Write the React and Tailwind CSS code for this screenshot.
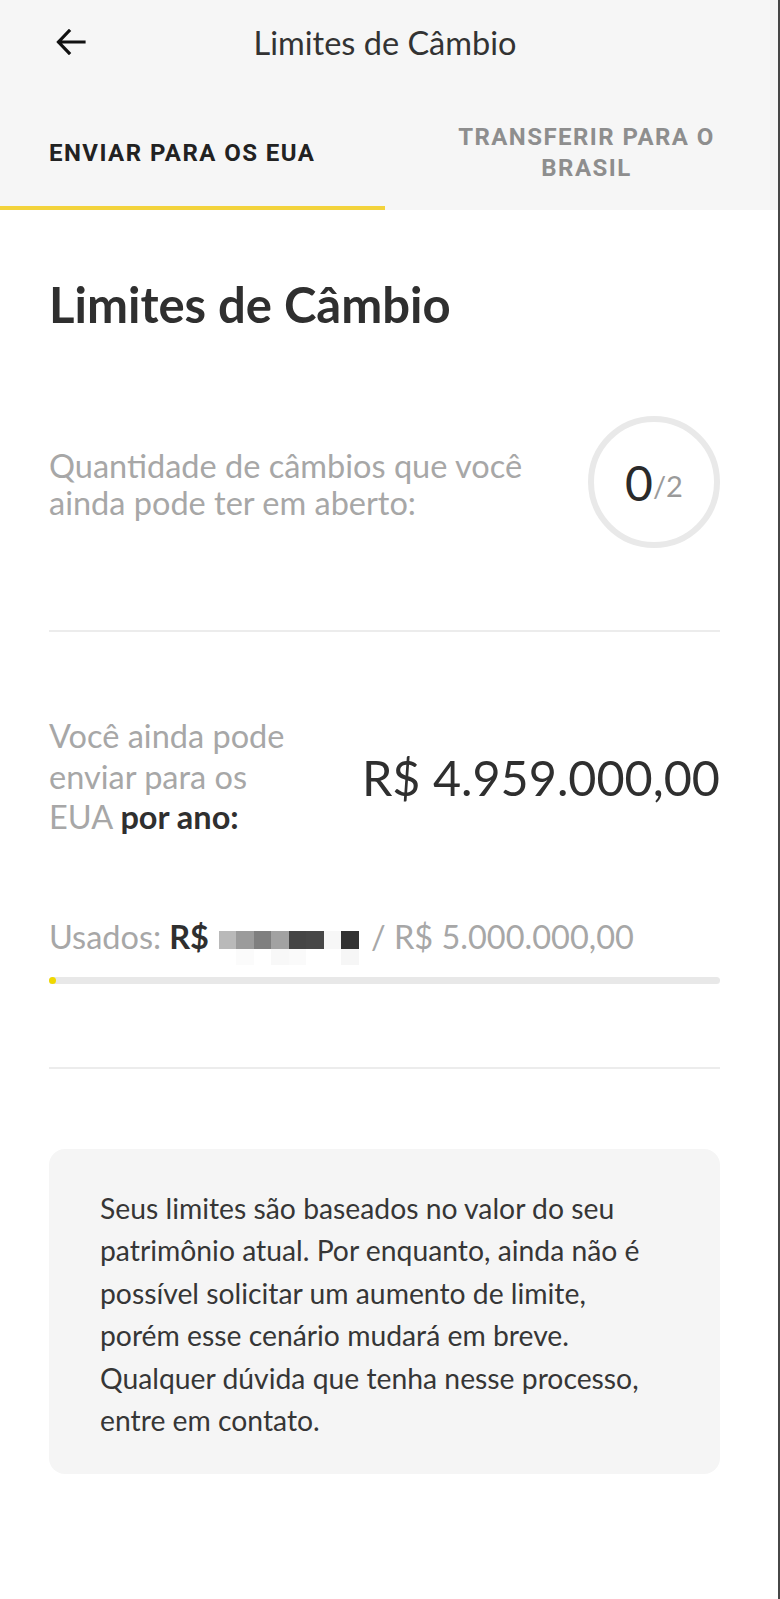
import React from "react";

const lato = { fontFamily: "Lato, 'Open Sans', sans-serif" };

function ArrowLeft() {
  return (
    <svg width="30" height="26" viewBox="0 0 30 26" fill="none">
      <path d="M28 13H3M13 2L2.5 13L13 24" stroke="#111" strokeWidth="3.2" strokeLinecap="square" strokeLinejoin="miter" />
    </svg>
  );
}

function Censor() {
  const top = ["#b9b9b9", "#9b9b9b", "#7f7f7f", "#a2a2a2", "#454545", "#474747", "#f7f7f7", "#323232"];
  const bottom = ["#ffffff", "#fbfbfb", "#ffffff", "#f8f8f8", "#fafafa", "#ffffff", "#ffffff", "#f6f6f6"];
  return (
    <span className="inline-flex flex-col ml-[10px] mr-[12px] mt-[13px]">
      <span className="flex">
        {top.map((c, i) => (
          <span key={i} className="block w-[17.5px] h-[18px]" style={{ backgroundColor: c }} />
        ))}
      </span>
      <span className="flex">
        {bottom.map((c, i) => (
          <span key={i} className="block w-[17.5px] h-[16px]" style={{ backgroundColor: c }} />
        ))}
      </span>
    </span>
  );
}

export default function App() {
  return (
    <div className="w-[780px] min-h-[1599px] bg-white border-r-2 border-[#474747]" style={lato}>
      {/* Header */}
      <div className="bg-[#f6f6f6]">
        <div className="relative h-[86px] flex items-center justify-center">
          <div className="absolute left-[56px] top-[29px]">
            <ArrowLeft />
          </div>
          <span className="text-[32.5px] text-[#333] pr-[8px]">Limites de Câmbio</span>
        </div>
        <div className="grid grid-cols-2 h-[124px]" style={{ fontFamily: "Roboto, sans-serif" }}>
          <div className="flex flex-col">
            <div className="flex-1 flex items-center pl-[49px] pt-[14px]">
              <span className="text-[24px] font-bold tracking-[0.06em] text-[#222] leading-none">ENVIAR PARA OS EUA</span>
            </div>
            <div className="h-[4px] w-[385px] bg-[#f3d33b]" />
          </div>
          <div className="flex items-center justify-center pt-[9px] pl-[6px]">
            <span className="text-[24px] font-bold tracking-[0.06em] text-[#8e8e8e] text-center leading-[31px]">
              TRANSFERIR PARA O<br />BRASIL
            </span>
          </div>
        </div>
      </div>

      {/* Content */}
      <div className="pl-[49px] pr-[58px]">
        <h1 className="mt-[66px] text-[49px] font-bold text-[#2f2f2f] leading-[56px]">Limites de Câmbio</h1>

        <div className="mt-[84px] flex items-center justify-between">
          <p className="text-[32.5px] leading-[37.5px] text-[#a7a7a7] w-[500px] pt-[4px]">
            Quantidade de câmbios que você ainda pode ter em aberto:
          </p>
          <div className="w-[132px] h-[132px] rounded-full border-[6px] border-[#e9e9e9] flex items-center justify-center">
            <span className="text-[48px] font-normal text-[#2a2a2a] leading-none mt-[2px]">0</span>
            <span className="text-[29px] text-[#9a9a9a] leading-none mt-[6px]">/2</span>
          </div>
        </div>

        <div className="mt-[82px] h-[2px] bg-[#ececec]" />

        <div className="mt-[84px] flex items-center justify-between">
          <p className="text-[32.5px] leading-[40.5px] text-[#a7a7a7] w-[250px]">
            Você ainda pode enviar para os EUA <span className="font-bold text-[#2f2f2f]">por ano:</span>
          </p>
          <span className="text-[48.5px] text-[#2f2f2f] leading-none">R$ 4.959.000,00</span>
        </div>

        <div className="mt-[80px] text-[32.5px] text-[#a7a7a7] leading-[37px] flex items-start h-[37px]">
          <span>Usados:</span>
          <span className="font-bold text-[#2f2f2f] ml-[8px]">R$</span>
          <Censor />
          <span>/ R$ 5.000.000,00</span>
        </div>

        <div className="mt-[22px] h-[7px] rounded-full bg-[#e8e8e8] relative">
          <div className="absolute left-0 top-0 h-[7px] w-[7px] rounded-full bg-[#f0d800]" />
        </div>

        <div className="mt-[83px] h-[2px] bg-[#ececec]" />

        <div className="mt-[80px] rounded-[16px] bg-[#f5f5f5] pl-[51px] pr-[20px] pt-[38px] pb-[32px]">
          <p className="text-[28.3px] leading-[42.6px] text-[#363636]">
            Seus limites são baseados no valor do seu
            <br />
            patrimônio atual. Por enquanto, ainda não é
            <br />
            possível solicitar um aumento de limite,
            <br />
            porém esse cenário mudará em breve.
            <br />
            Qualquer dúvida que tenha nesse processo,
            <br />
            entre em contato.
          </p>
        </div>
      </div>
    </div>
  );
}
